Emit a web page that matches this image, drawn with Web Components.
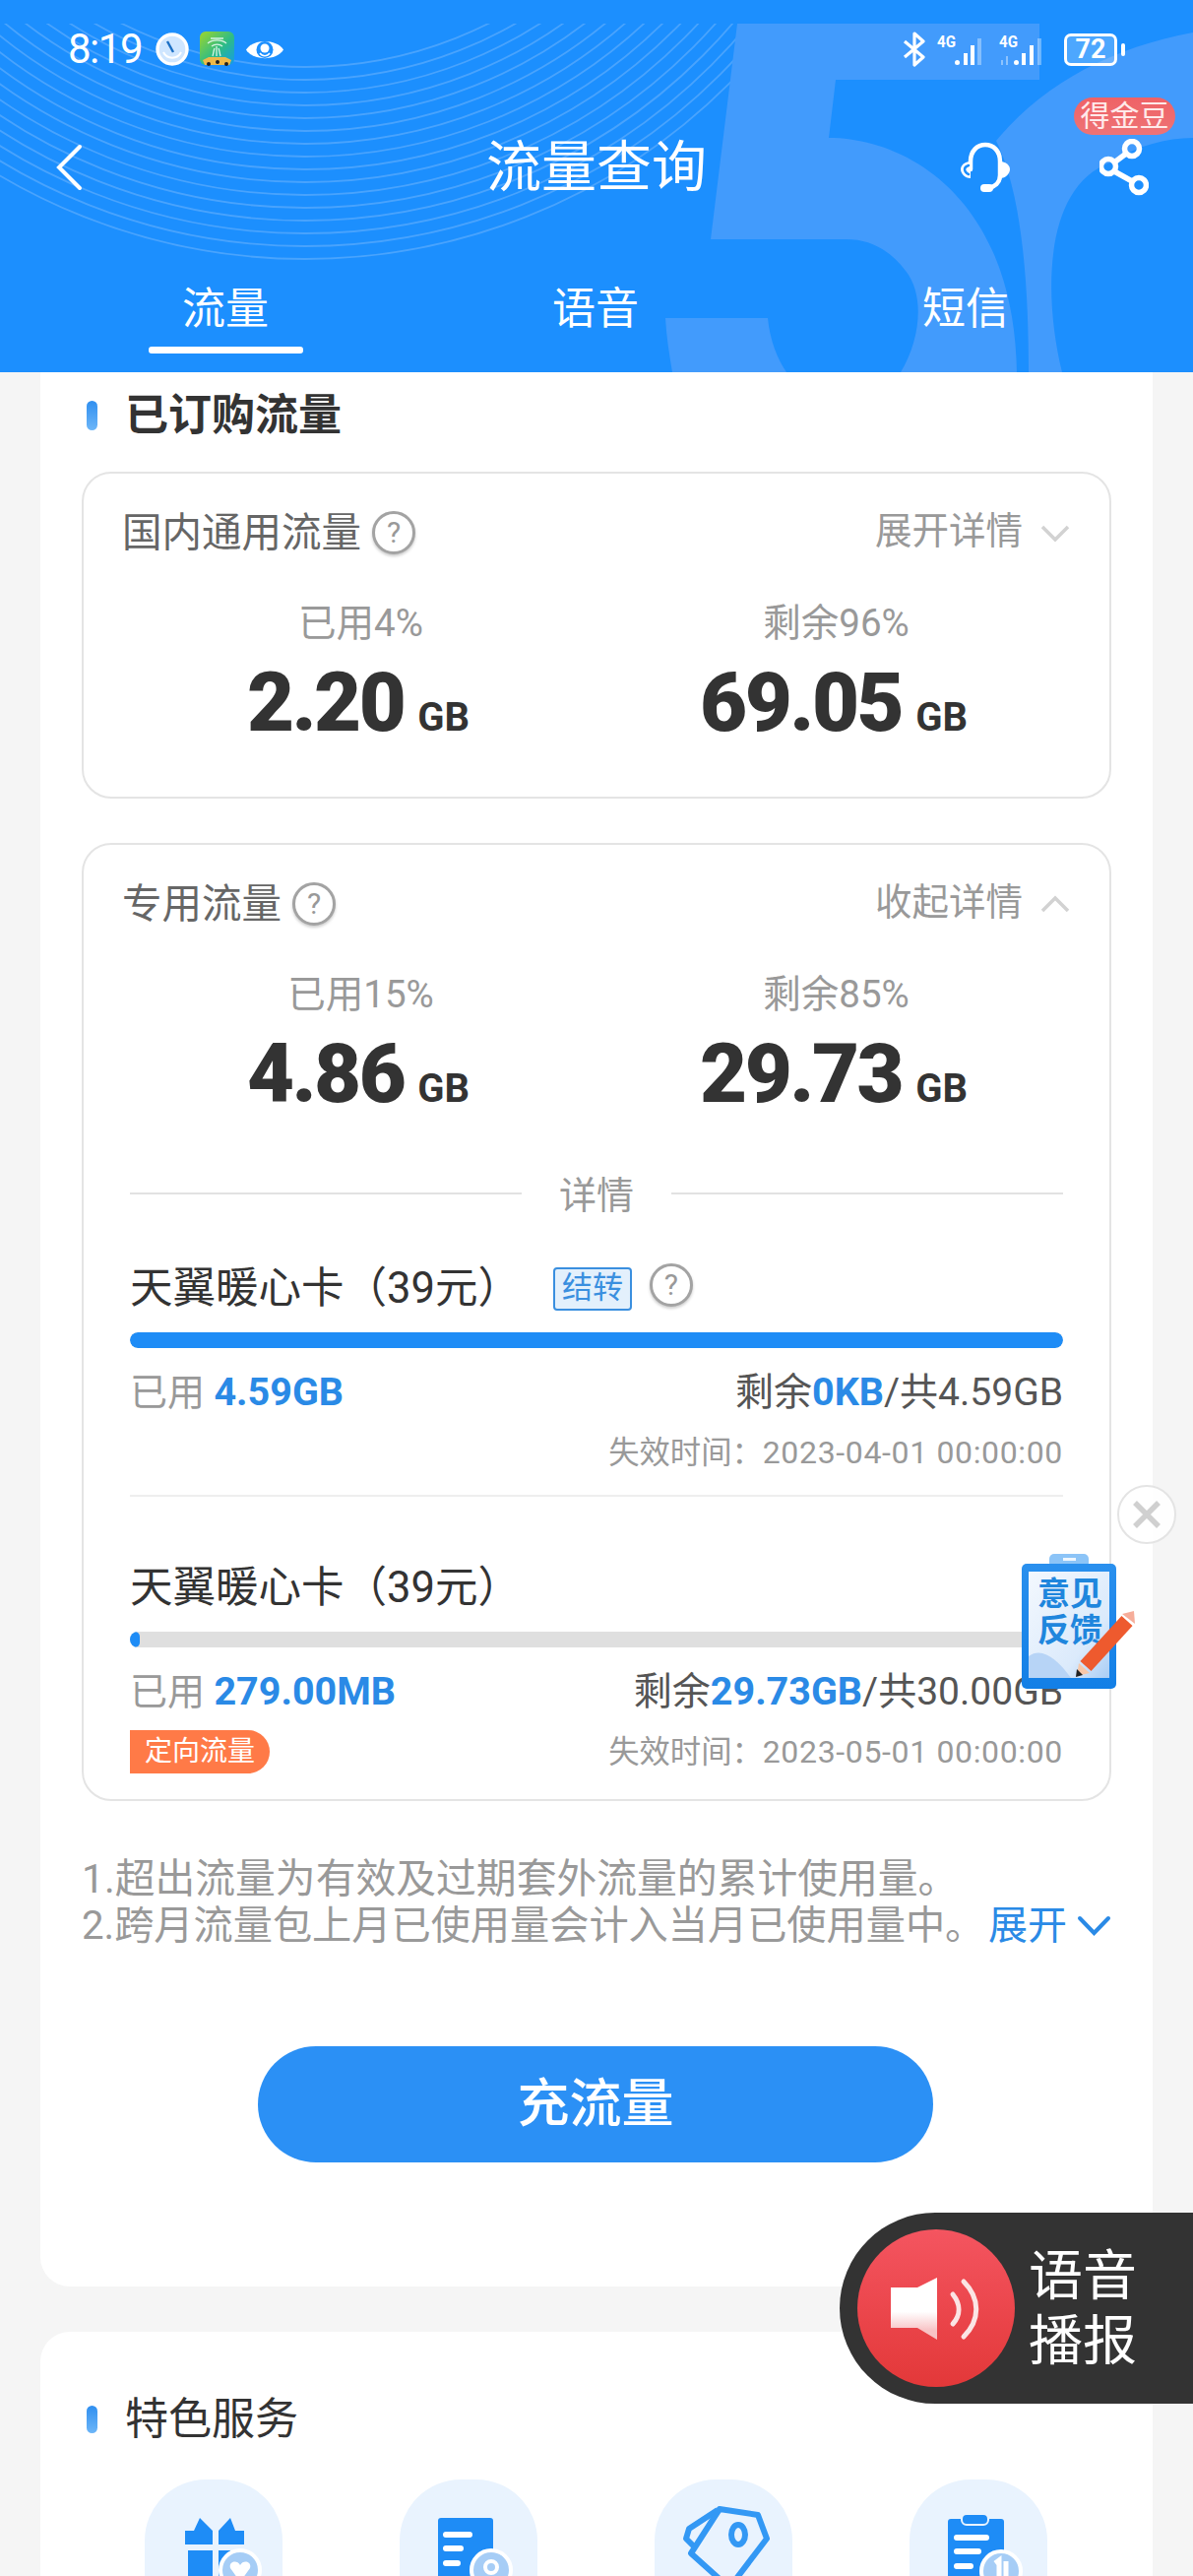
<!DOCTYPE html>
<html lang="zh">
<head>
<meta charset="utf-8">
<title>流量查询</title>
<style>
    html, body { margin: 0; padding: 0; }
    body {
        width: 1212px;
        height: 2616px;
        overflow: hidden;
        background: #f5f5f5;
        font-family: Roboto, "Noto Sans CJK SC", sans-serif;
    }
    #page { position: relative; width: 1212px; height: 2616px; overflow: hidden; }
</style>
</head>
<body>
<div id="page">
    <app-header></app-header>

    <white-panel style="height:1944px" top="14">
        <sec-title strong>已订购流量</sec-title>
        <flow-card label="国内通用流量" action="展开详情" used="已用4%" used-value="2.20" left="剩余96%" left-value="69.05" gap="27"></flow-card>
        <flow-card label="专用流量" action="收起详情" open used="已用15%" used-value="4.86" left="剩余85%" left-value="29.73" gap="45">
            <detail-rule>详情</detail-rule>
            <plan-item name="天翼暖心卡（39元）" percent="100" used="4.59GB" rest="0KB" total="4.59GB" expire="2023-04-01 00:00:00" carry divided></plan-item>
            <plan-item name="天翼暖心卡（39元）" percent="1" used="279.00MB" rest="29.73GB" total="30.00GB" expire="2023-05-01 00:00:00" tag="定向流量" last></plan-item>
        </flow-card>
        <flow-notes></flow-notes>
        <charge-button>充流量</charge-button>
    </white-panel>

    <white-panel style="height:300px;margin-top:46px" top="59">
        <sec-title>特色服务</sec-title>
        <service-grid></service-grid>
    </white-panel>

    <feedback-float></feedback-float>
    <voice-float></voice-float>
</div>

<script>
const CJK = 'Roboto, "Noto Sans CJK SC", sans-serif';

class BaseEl extends HTMLElement {
    constructor() {
        super();
        this.attachShadow({ mode: "open" });
    }
    connectedCallback() {
        this.shadowRoot.innerHTML = this.render();
    }
}

class AppHeader extends BaseEl {
    render() {
        let arcs = "";
        for (let r = 415; r <= 622; r += 13) {
            arcs += `<circle cx="310" cy="-347" r="${r}"/>`;
        }
        return `
        <style>
            :host { display: block; position: relative; height: 378px; background: #1c8ffe; color: #fff; overflow: hidden; font-family: ${CJK}; }
            .bg { position: absolute; left: 0; top: 0; }
            .status, .nav, .tabs { position: relative; }
            .status { height: 100px; padding: 0 69px; box-sizing: border-box; display: flex; align-items: center; justify-content: space-between; }
            .group { display: flex; align-items: center; }
            .time { font-size: 42px; line-height: 44px; width: 89px; letter-spacing: -1.500px; }
            .nav { height: 140px; display: grid; grid-template-columns: 1fr auto 1fr; align-items: center; }
            .back { padding-left: 57px; display: flex; }
            .title { font-size: 56px; line-height: 70px; }
            .acts { display: flex; justify-content: flex-end; align-items: center; gap: 89px; padding-right: 45px; position: relative; }
            .badge { position: absolute; right: 18px; top: -42px; width: 103px; height: 38px; border-radius: 19px; background: linear-gradient(#ef6266, #ee7376); font-size: 30px; line-height: 37px; text-align: center; color: #ffeaea; }
            .tabs { display: grid; grid-template-columns: repeat(3, 376px); padding: 44px 40px 0 41px; }
            .tab { text-align: center; font-size: 44px; line-height: 60px; }
            .line { width: 157px; height: 7px; margin: 8px auto 0; background: #fff; border-radius: 3px; }
            .batt { width: 54px; height: 33px; box-sizing: border-box; border: 3px solid #fff; border-radius: 7px; font-size: 27px; font-weight: 700; line-height: 27px; text-align: center; background: rgba(255,255,255,.22); }
            .nub { width: 4px; height: 13px; margin-left: 4px; background: #fff; border-radius: 2px; }
        </style>
        <svg class="bg" width="1212" height="378" viewBox="0 0 1212 378">
            <defs><clipPath id="c"><rect x="0" y="24" width="1212" height="354"/></clipPath></defs>
            <g clip-path="url(#c)">
                <g fill="none" stroke="#55a9fd" stroke-width="1.800" opacity=".8">${arcs}</g>
                <path fill="#429bfc" d="M749 24H1056V81H849L842 140C920 140 1030 200 1033 378H915C935 345 940 300 920 275 905 255 885 243 860 243H722ZM676 323H780C782 345 790 365 799 378H683C680 360 677 342 676 323Z"/>
                <path fill="#429bfc" d="M1212 33C1130 48 1060 85 1012 143 1040 200 1045 300 1045 378H1079C1060 300 1060 190 1128 165 1155 148 1185 140 1212 140Z"/>
            </g>
        </svg>
        <div class="status">
            <div class="group">
                <span class="time">8:19</span>
                <svg width="34" height="34" viewBox="0 0 34 34"><circle cx="17" cy="17" r="15" fill="#cfe6ff" stroke="#fff" stroke-width="3.400"/><path d="M12 9 18 20" stroke="#1c6fc4" stroke-width="2.400"/><path d="M8 20a10 10 0 0 0 18 0" stroke="#fff" stroke-width="2" fill="none"/></svg>
                <svg style="margin-left:11px" width="35" height="36" viewBox="0 0 35 36">
                    <defs><linearGradient id="app" x1="0" y1="0" x2="1" y2="1"><stop offset="0" stop-color="#9ed62c"/><stop offset=".55" stop-color="#2ebc86"/><stop offset="1" stop-color="#149be8"/></linearGradient></defs>
                    <rect width="35" height="34" rx="6" fill="url(#app)"/>
                    <path d="M11 7h13M8 12a12 8 0 0 1 19 0M12 15a7 5 0 0 1 11 0M17 15v10M13 25c1-3 1-6 2-8M21 25c-1-3-1-6-2-8" stroke="#d8f3e4" stroke-width="1.300" fill="none"/>
                    <path d="M3 29 9 26H26L32 29 30 34H5Z" fill="#eeb949"/><circle cx="9" cy="33" r="2" fill="#222"/><circle cx="18" cy="31" r="2" fill="#222"/><circle cx="27" cy="33" r="2" fill="#222"/>
                </svg>
                <svg style="margin-left:11px" width="40" height="27" viewBox="0 0 40 27"><path d="M1 13.500C8 2 32 2 39 13.500 32 25 8 25 1 13.500Z" fill="#fff"/><circle cx="20" cy="13.500" r="8.500" fill="#1c8ffe"/><circle cx="20" cy="12" r="4.500" fill="#fff"/><path d="M15 17a6 6 0 0 0 10 0" stroke="#fff" stroke-width="1.500" fill="none"/></svg>
            </div>
            <div class="group">
                <svg width="24" height="36" viewBox="0 0 24 36" fill="none" stroke="#fff" stroke-width="3.200" stroke-linejoin="round"><path d="M2 10 21 26 12 34V2L21 10 2 26"/></svg>
                <svg style="margin-left:11px" width="51" height="35" viewBox="0 0 51 35"><text x="0" y="15" font-size="17" font-weight="700" fill="#fff" font-family="Roboto, sans-serif" textLength="19" lengthAdjust="spacingAndGlyphs">4G</text>
                    <g fill="#fff"><rect x="18" y="28" width="5" height="5" rx="2.500"/><rect x="27" y="21" width="4" height="12"/><rect x="34" y="13" width="4" height="20"/></g><g fill="#fff" opacity=".35"><rect x="41" y="6" width="4" height="27"/></g></svg>
                <svg style="margin-left:12px" width="46" height="35" viewBox="0 0 46 35"><text x="0" y="15" font-size="17" font-weight="700" fill="#fff" font-family="Roboto, sans-serif" textLength="19" lengthAdjust="spacingAndGlyphs">4G</text>
                    <path d="M3 28v5M8 24v9" stroke="#fff" stroke-opacity=".4" stroke-width="2"/><g fill="#fff"><rect x="15" y="28" width="5" height="5" rx="2.500"/><rect x="23" y="21" width="4" height="12"/><rect x="31" y="13" width="4" height="20"/></g><g fill="#fff" opacity=".35"><rect x="39" y="6" width="4" height="27"/></g></svg>
                <div class="batt" style="margin-left:20px">72</div>
                <div class="nub"></div>
            </div>
        </div>
        <div class="nav">
            <div class="back"><svg width="27" height="48" viewBox="0 0 27 48" fill="none" stroke="#fff" stroke-width="4" stroke-linecap="round"><path d="M24 3 3 24 24 45"/></svg></div>
            <div class="title">流量查询</div>
            <div class="acts">
                <svg width="54" height="52" viewBox="0 0 54 52" fill="none" stroke="#fff" stroke-width="4.500" stroke-linecap="round"><path d="M12 28V20C12 9 19 3 27 3S42 9 42 20V34C42 42 36 46 30 47"/><path d="M12 20C6 20 2 24 2 28S6 37 12 37Z" fill="#fff" stroke="none"/><path d="M42 20C48 20 52 24 52 28S48 37 42 37Z" fill="#fff" stroke="none"/><path d="M10 24C7 25 6 27 6 28S7 32 10 33" stroke="#1c8ffe" stroke-width="2.500"/><rect x="22" y="43" width="13" height="8" rx="4" fill="#fff" stroke="none"/></svg>
                <svg width="50" height="58" viewBox="0 0 50 58" fill="none" stroke="#fff" stroke-width="5.500"><circle cx="33" cy="10" r="7.500"/><circle cx="9" cy="28" r="7.500"/><circle cx="40" cy="47" r="7.500"/><path d="M27 15 15 24M15 33 33 43"/></svg>
                <div class="badge">得金豆</div>
            </div>
        </div>
        <div class="tabs">
            <div class="tab">流量<div class="line"></div></div>
            <div class="tab">语音</div>
            <div class="tab">短信</div>
        </div>`;
    }
}

class WhitePanel extends BaseEl {
    render() {
        const top = this.getAttribute("top") || 0;
        return `
        <style>
            :host { display: block; box-sizing: border-box; width: 1130px; margin-left: 41px; background: #fff; border-radius: 0 0 30px 30px; }
            :host(:nth-of-type(2)) { border-radius: 30px 30px 0 0; }
            .in { padding-top: ${top}px; }
        </style>
        <div class="in"><slot></slot></div>`;
    }
}

class SecTitle extends BaseEl {
    render() {
        const strong = this.hasAttribute("strong");
        return `
        <style>
            :host { display: flex; align-items: center; height: 60px; padding-left: 47px; font-family: ${CJK}; color: #333; }
            i { width: 11px; height: ${strong ? 30 : 28}px; border-radius: 6px; background: linear-gradient(#2f8ff0, #6db6f8); }
            span { margin-left: 28px; font-size: 44px; line-height: 62px; font-weight: ${strong ? 700 : 400}; }
        </style>
        <i></i><span><slot></slot></span>`;
    }
}

class HelpMark extends BaseEl {
    render() {
        return `
        <style>
            :host { display: inline-block; width: 44px; height: 44px; box-sizing: border-box; border: 3px solid #a3a3a3; border-radius: 50%; box-shadow: 0 2px 3px rgba(0,0,0,.2); background: #fff; font: 30px/38px Roboto, sans-serif; color: #999; text-align: center; }
        </style>?`;
    }
}

class FlowStat extends BaseEl {
    render() {
        return `
        <style>
            :host { display: block; text-align: center; font-family: ${CJK}; }
            .l { font-size: 38.500px; line-height: 50px; color: #999; }
            .v { margin-top: 11px; height: 90px; line-height: 90px; padding-right: 5px; color: #333; font-weight: 700; white-space: nowrap; }
            b { font-size: 83px; letter-spacing: -2.500px; }
            em { font-style: normal; font-size: 40px; margin-left: 14px; }
        </style>
        <div class="l">${this.getAttribute("label")}</div>
        <div class="v"><b>${this.getAttribute("value")}</b><em>GB</em></div>`;
    }
}

class FlowCard extends BaseEl {
    render() {
        const open = this.hasAttribute("open");
        const chev = open ? "M3 17 16 4 29 17" : "M3 4 16 17 29 4";
        return `
        <style>
            :host { display: block; box-sizing: border-box; width: 1046px; margin: ${this.getAttribute("gap")}px 0 0 42px; padding: 35px 0 0; border: 2px solid #e4e4e4; border-radius: 30px; font-family: ${CJK}; }
            .head { display: flex; align-items: center; height: 50px; padding: 0 39px 0 39px; }
            .t { font-size: 40.500px; line-height: 50px; color: #666; }
            help-mark { margin-left: 11px; }
            .a { margin: 0 0 3px auto; font-size: 37.500px; line-height: 47px; color: #999; }
            .head svg { margin-left: 17px; }
            .stats { display: grid; grid-template-columns: 483px 483px; padding: 42px 40px ${open ? 0 : 50}px; }
            .slot { padding: 0 47px; }
        </style>
        <div class="head">
            <span class="t">${this.getAttribute("label")}</span><help-mark></help-mark>
            <span class="a">${this.getAttribute("action")}</span>
            <svg width="32" height="21" viewBox="0 0 32 21" fill="none" stroke="#d2d2d2" stroke-width="3.500"><path d="${chev}"/></svg>
        </div>
        <div class="stats">
            <flow-stat label="${this.getAttribute("used")}" value="${this.getAttribute("used-value")}"></flow-stat>
            <flow-stat label="${this.getAttribute("left")}" value="${this.getAttribute("left-value")}"></flow-stat>
        </div>
        <div class="slot"><slot></slot></div>`;
    }
}

class DetailRule extends BaseEl {
    render() {
        return `
        <style>
            :host { display: flex; align-items: center; height: 50px; margin-top: 51px; font-family: ${CJK}; }
            i { flex: 1; height: 2px; background: #e2e2e2; }
            span { width: 152px; padding-top: 3px; text-align: center; font-size: 38px; line-height: 50px; color: #999; }
        </style>
        <i></i><span><slot></slot></span><i></i>`;
    }
}

class PlanItem extends BaseEl {
    render() {
        const g = (n) => this.getAttribute(n);
        const last = this.hasAttribute("last");
        const carry = this.hasAttribute("carry")
            ? `<span class="carry">结转</span><help-mark style="margin-left:18px;position:relative;top:-4px"></help-mark>` : "";
        const tag = g("tag") ? `<span class="tag">${g("tag")}</span>` : "";
        return `
        <style>
            :host { display: block; font-family: ${CJK}; padding: ${last ? "63px 0 26px" : "42px 0 21px"}; ${this.hasAttribute("divided") ? "border-bottom: 2px solid #eee;" : ""} }
            .name { display: flex; align-items: center; height: 60px; font-size: 43.500px; line-height: 60px; color: #333; white-space: nowrap; }
            .carry { display: block; width: 80px; height: 44px; margin-left: 33px; box-sizing: border-box; border: 2px solid #3a8fdf; border-radius: 4px; background: #e3f0fc; color: #3a8fdf; font-size: 31px; line-height: 38px; text-align: center; }
            .track { height: 16px; margin-top: 14px; border-radius: 8px; background: #dfdfdf; overflow: hidden; }
            .fill { height: 100%; min-width: 10px; border-radius: 8px; background: #1e8cf6; }
            .row { display: flex; justify-content: space-between; align-items: center; height: 50px; margin-top: 16px; white-space: nowrap; }
            .u { font-size: 38px; color: #999; }
            .u b, .r b { color: #2a8ae6; font-size: 39.500px; font-weight: 700; }
            .r { font-size: 39px; color: #555; }
            .foot { display: flex; justify-content: space-between; align-items: center; height: 44px; margin-top: 18px; }
            .tag { width: 142px; height: 44px; border-radius: 0 22px 22px 0; background: #ff7a47; color: #fff; font-size: 28px; line-height: 44px; text-align: center; }
            .exp { margin-left: auto; font-size: 31.300px; line-height: 44px; color: #999; white-space: nowrap; }
            .exp span { font-size: 32px; letter-spacing: .65px; }
        </style>
        <div class="name"><span>${g("name")}</span>${carry}</div>
        <div class="track"><div class="fill" style="width:${g("percent")}%"></div></div>
        <div class="row">
            <span class="u">已用 <b>${g("used")}</b></span>
            <span class="r">剩余<b>${g("rest")}</b>/共${g("total")}</span>
        </div>
        <div class="foot">${tag}<span class="exp">失效时间：<span>${g("expire")}</span></span></div>`;
    }
}

class FlowNotes extends BaseEl {
    render() {
        return `
        <style>
            :host { display: block; margin: 55px 42px 0; font: 40.800px/48px ${CJK}; color: #999; white-space: nowrap; }
            .two { display: flex; align-items: center; justify-content: space-between; }
            .txt { font-size: 40.200px; }
            .more { font-size: 40px; color: #2a8ae6; display: flex; align-items: center; }
            svg { margin-left: 10px; }
        </style>
        <div>1.超出流量为有效及过期套外流量的累计使用量。</div>
        <div class="two"><span class="txt">2.跨月流量包上月已使用量会计入当月已使用量中。</span>
            <span class="more">展开<svg width="35" height="22" viewBox="0 0 35 22" fill="none" stroke="#2a8ae6" stroke-width="4" stroke-linecap="round"><path d="M3 3 17.500 18 32 3"/></svg></span></div>`;
    }
}

class ChargeButton extends BaseEl {
    render() {
        return `
        <style>
            :host { display: block; width: 686px; height: 118px; margin: 98px 0 0 221px; border-radius: 59px; background: #2b90f5; color: #fff; font: 500 53px/118px ${CJK}; text-align: center; }
        </style><slot></slot>`;
    }
}

class ServiceGrid extends BaseEl {
    render() {
        const badge = (inner) => `<circle cx="0" cy="0" r="20" fill="#a6cdf6" stroke="#fff" stroke-width="4"/>${inner}`;
        const icons = [
            // gift
            `<path fill="#1e8cf6" d="M41 66V52H50L56 39 69 52V66ZM75 66V52L87 39 92 52H101V66Z"/>
             <rect x="44" y="72" width="25" height="60" fill="#1e8cf6"/><rect x="75" y="72" width="12" height="60" fill="#1e8cf6"/>
             <g transform="translate(97 92)">${badge('<path fill="#fff" d="M0 12-10-2C-12-9-3-11 0-5 3-11 12-9 10-2Z"/>')}</g>`,
            // document with search badge
            `<rect x="39" y="39" width="56" height="100" rx="3" fill="#1e8cf6"/>
             <path d="M47 56H71M47 70H62M47 85H59" stroke="#fff" stroke-width="6" stroke-linecap="round"/>
             <g transform="translate(93 92)">${badge('<circle cx="0" cy="-3" r="6" fill="none" stroke="#fff" stroke-width="4"/><path d="M-8 16C-6 7 6 7 8 16" fill="#fff"/>')}</g>`,
            // tag
            `<g fill="none" stroke="#3398f4" stroke-width="6" stroke-linejoin="round"><path d="M64 31 35 50 32 60 42 70"/><path d="M66 30 105 36 114 60 76 110 37 75Z"/><ellipse cx="85" cy="56" rx="7" ry="10"/></g>`,
            // clipboard with badge
            `<rect x="39" y="40" width="57" height="100" rx="3" fill="#1e8cf6"/><rect x="53" y="35" width="27" height="11" rx="5" fill="#1e8cf6" stroke="#e9f3fe" stroke-width="2"/>
             <path d="M48 59H78M48 73H70M48 88H62" stroke="#fff" stroke-width="6" stroke-linecap="round"/>
             <g transform="translate(93 93)">${badge('<path d="M-6-8-2-11V10M5-10V8H12" fill="none" stroke="#fff" stroke-width="5"/>')}</g>`,
        ];
        return `
        <style>
            :host { display: grid; grid-template-columns: repeat(4, 259px); margin: 31px 0 0 46px; }
            .cell { display: flex; justify-content: center; }
            .blob { width: 140px; height: 160px; background: #e9f3fe; border-radius: 62px 62px 50px 50px; }
            svg { display: block; }
        </style>
        ${icons.map((ic) => `<div class="cell"><div class="blob"><svg width="140" height="160" viewBox="0 0 140 160">${ic}</svg></div></div>`).join("")}`;
    }
}

class FeedbackFloat extends BaseEl {
    render() {
        return `
        <style>
            :host { position: absolute; left: 1036px; top: 1506px; width: 162px; height: 212px; display: block; font-family: ${CJK}; }
            .x { position: absolute; left: 99px; top: 2px; width: 60px; height: 60px; box-sizing: border-box; border: 2px solid #e4e4e4; border-radius: 50%; background: rgba(255,255,255,.9); }
            svg { position: absolute; left: 0; top: 0; }
            .txt { position: absolute; left: 18px; top: 94px; width: 66px; font-size: 33px; line-height: 37px; font-weight: 700; color: #1f86dd; text-align: center; }
        </style>
        <div class="x"><svg width="56" height="56" viewBox="0 0 56 56"><path d="M16 16 40 40M40 16 16 40" stroke="#d0d0d0" stroke-width="5.500"/></svg></div>
        <svg width="118" height="212" viewBox="0 0 118 212">
            <defs>
                <linearGradient id="fb" x1="0" y1="0" x2="1" y2="1"><stop offset="0" stop-color="#f3f8fe"/><stop offset=".7" stop-color="#dbeafb"/><stop offset="1" stop-color="#a9cdf5"/></linearGradient>
                <linearGradient id="rim" x1="0" y1="0" x2="0" y2="1"><stop offset="0" stop-color="#2a90ee"/><stop offset="1" stop-color="#127fe6"/></linearGradient>
            </defs>
            <rect x="30" y="72" width="40" height="14" rx="5" fill="#8cc4f7"/>
            <rect x="44" y="76" width="13" height="3" fill="#eef6fe"/>
            <rect x="2" y="82" width="96" height="127" rx="5" fill="url(#rim)"/>
            <rect x="9" y="90" width="82" height="108" fill="url(#fb)"/>
            <path d="M9 198V176C22 166 38 178 52 198Z" fill="#b7d4f6"/>
        </svg>
        <div class="txt">意见<br>反馈</div>
        <svg width="162" height="212" viewBox="0 0 162 212">
            <path d="M67 186 109 140" stroke="#ee5a2e" stroke-width="15"/>
            <path d="M104 133 116 130 117 143Z" fill="#f6ad9a"/>
            <path d="M58 196 60 183 71 193Z" fill="#f7c7a8"/>
            <path d="M57 197 58 189 64 195Z" fill="#222"/>
        </svg>`;
    }
}

class VoiceFloat extends BaseEl {
    render() {
        return `
        <style>
            :host { position: absolute; left: 853px; top: 2247px; width: 359px; height: 194px; box-sizing: border-box; padding-left: 18px; display: flex; align-items: center; background: #333; border-radius: 97px 0 0 97px; font-family: ${CJK}; }
            .c { width: 160px; height: 160px; border-radius: 50%; background: linear-gradient(#f45560, #e33839); flex: none; }
            .t { margin-left: 14px; width: 110px; font-size: 55px; line-height: 66px; color: #fff; }
            svg { display: block; }
        </style>
        <div class="c"><svg width="160" height="160" viewBox="0 0 160 160">
            <defs><linearGradient id="sp" x1="0" y1="0" x2="0" y2="1"><stop offset=".55" stop-color="#fff"/><stop offset=".85" stop-color="#f8c3c5"/></linearGradient></defs>
            <path d="M34 59H61L81 49V112L61 100H34Z" fill="url(#sp)"/>
            <path d="M97 66C105 76 105 87 97 96M108 53C125 70 125 92 108 109" fill="none" stroke="#fbe4e4" stroke-width="5" stroke-linecap="round"/>
        </svg></div>
        <div class="t">语音<br>播报</div>`;
    }
}

customElements.define("app-header", AppHeader);
customElements.define("white-panel", WhitePanel);
customElements.define("sec-title", SecTitle);
customElements.define("help-mark", HelpMark);
customElements.define("flow-stat", FlowStat);
customElements.define("flow-card", FlowCard);
customElements.define("detail-rule", DetailRule);
customElements.define("plan-item", PlanItem);
customElements.define("flow-notes", FlowNotes);
customElements.define("charge-button", ChargeButton);
customElements.define("service-grid", ServiceGrid);
customElements.define("feedback-float", FeedbackFloat);
customElements.define("voice-float", VoiceFloat);
</script>
</body>
</html>
